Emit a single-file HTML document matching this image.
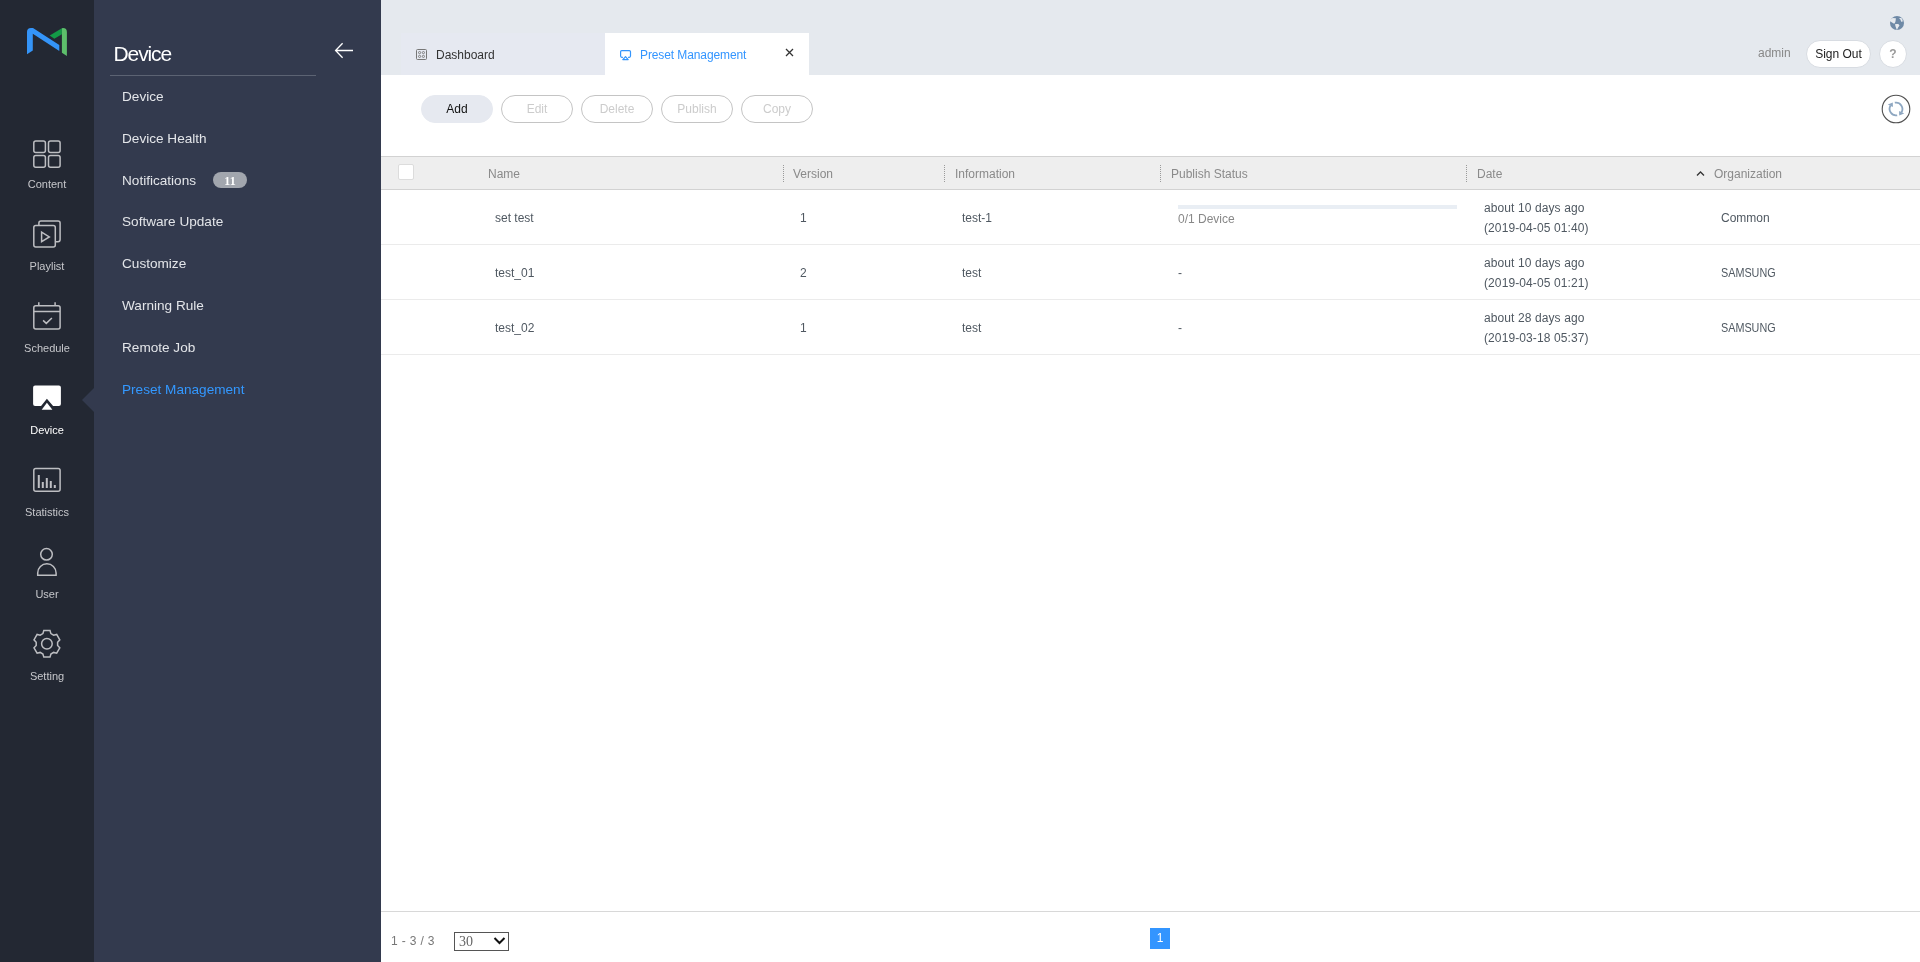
<!DOCTYPE html>
<html><head><meta charset="utf-8">
<style>
*{box-sizing:border-box;margin:0;padding:0}
html,body{width:1920px;height:962px;overflow:hidden;background:#fff;font-family:"Liberation Sans",sans-serif}
body{will-change:transform}
.abs{position:absolute}
#nav{position:absolute;left:0;top:0;width:94px;height:962px;background:#232833}
#side{position:absolute;left:94px;top:0;width:287px;height:962px;background:#333a4e}
#hdr{position:absolute;left:381px;top:0;width:1539px;height:75px;background:#e5e9ee}
.navlbl{position:absolute;left:0;width:94px;text-align:center;font-size:11px;color:#c6c7cb;line-height:13px;margin-top:1px}
.sitem{position:absolute;left:122px;font-size:13.6px;color:#e3e5e9;line-height:16px;white-space:nowrap}
.btn{position:absolute;top:95px;width:72px;height:28px;border-radius:14px;border:1px solid #c4c4c4;font-size:12px;line-height:26px;text-align:center;color:#cccccc;background:#fff}
.th{position:absolute;top:167px;font-size:12px;color:#8a8a8a;line-height:14px;white-space:nowrap}
.sep{position:absolute;top:165px;width:1px;height:17px;background:repeating-linear-gradient(to bottom,#9a9a9a 0,#9a9a9a 1px,transparent 1px,transparent 2px)}
.td{position:absolute;font-size:12px;color:#4f5861;line-height:14px;white-space:nowrap}
.rowb{position:absolute;left:381px;width:1539px;height:1px;background:#ebebeb}
</style></head><body>
<div id="nav">
  <svg class="abs" style="left:0;top:0" width="94" height="700" viewBox="0 0 94 700">
    <!-- logo -->
    <path d="M27 54.3 L27 32 Q27 28 31 28 L33 28 L59.3 45 L59.3 50.9 L32.8 33.7 L32.8 50.6 Z" fill="#3494f8"/>
    <path d="M49.7 35.6 L61.9 28.2 L61.9 34.2 L54.3 38.8 Z" fill="#139a47"/>
    <path d="M61.9 28.2 L63 28 Q66.9 28 66.9 32 L66.9 55.9 L61.9 52.7 Z" fill="#5dbf6b"/>
    <g fill="none" stroke="#bdbec2" stroke-width="1.5">
      <!-- content -->
      <rect x="33.8" y="140.9" width="11.6" height="11.6" rx="2"/>
      <rect x="48.5" y="140.9" width="11.6" height="11.6" rx="2"/>
      <rect x="33.8" y="155.6" width="11.6" height="11.6" rx="2"/>
      <rect x="48.5" y="155.6" width="11.6" height="11.6" rx="2"/>
      <!-- playlist -->
      <path d="M38.9 224.9 V223 Q38.9 220.9 41 220.9 H58 Q60.1 220.9 60.1 223 V239.6 Q60.1 241.7 58 241.7 H56"/>
      <rect x="33.8" y="225.6" width="21.5" height="21.5" rx="2"/>
      <path d="M41.6 232.2 L49.3 236.9 L41.6 241.6 Z"/>
      <!-- schedule -->
      <rect x="33.8" y="305.8" width="26.3" height="23.3" rx="2"/>
      <path d="M33.8 311.6 H60.1 M38.8 302.2 V305.8 M55.1 302.2 V305.8"/>
      <path d="M43.1 320.4 L46.3 323.4 L51.9 318"/>
      <!-- statistics -->
      <rect x="33.8" y="468.5" width="26.3" height="22.8" rx="2"/>
      <!-- user -->
      <circle cx="46.5" cy="554.3" r="5.8"/>
      <path d="M37.7 575.3 V573 A9.2 9.2 0 0 1 56.1 573 V575.3 Z"/>
      <!-- setting -->
      <circle cx="46.9" cy="643.8" r="5.3"/>
      <path d="M43.8 630.5 H50 L50.9 633.6 L53.6 635.2 L56.7 634.4 L59.8 639.8 L57.6 642.2 V645.4 L59.8 647.8 L56.7 653.2 L53.6 652.4 L50.9 654 L50 657.1 H43.8 L42.9 654 L40.2 652.4 L37.1 653.2 L34 647.8 L36.2 645.4 V642.2 L34 639.8 L37.1 634.4 L40.2 635.2 L42.9 633.6 Z"/>
    </g>
    <g fill="#bdbec2">
      <rect x="37.8" y="475" width="2" height="13"/>
      <rect x="41.8" y="482" width="2" height="6"/>
      <rect x="45.8" y="478" width="2" height="10"/>
      <rect x="49.8" y="481" width="2" height="7"/>
      <rect x="53.8" y="485" width="2" height="3"/>
    </g>
    <!-- device -->
    <path d="M35.1 385.6 H58.9 Q60.9 385.6 60.9 387.6 V404 Q60.9 406 58.9 406 H53.1 L46.9 398.7 L41.1 406 H35.1 Q33.1 406 33.1 404 V387.6 Q33.1 385.6 35.1 385.6 Z" fill="#fff"/>
    <path d="M46.9 402.7 L52.4 409.8 H41.7 Z" fill="#fff"/>
    <!-- pointer -->
    <path d="M94 388 L82 400 L94 412 Z" fill="#333a4e"/>
  </svg>
  <div class="navlbl" style="top:177px">Content</div>
  <div class="navlbl" style="top:259px">Playlist</div>
  <div class="navlbl" style="top:341px">Schedule</div>
  <div class="navlbl" style="top:423px;color:#fff">Device</div>
  <div class="navlbl" style="top:505px">Statistics</div>
  <div class="navlbl" style="top:587px">User</div>
  <div class="navlbl" style="top:669px">Setting</div>
</div>

<div id="side">
  <div class="abs" style="left:19.5px;top:42px;font-size:21px;letter-spacing:-1.1px;color:#fff;line-height:24px">Device</div>
  <div class="abs" style="left:16px;top:75px;width:206px;height:1px;background:#5c6373"></div>
  <svg class="abs" style="left:238px;top:40px" width="24" height="22" viewBox="0 0 24 22">
    <path d="M3.6 10.5 H21 M10.6 3.3 L3.6 10.5 L10.6 17.7" fill="none" stroke="#fff" stroke-width="1.3"/>
  </svg>
</div>
<div class="sitem" style="top:89px">Device</div>
<div class="sitem" style="top:131px">Device Health</div>
<div class="sitem" style="top:173px">Notifications</div>
<div class="abs" style="left:213px;top:172px;width:34px;height:16px;border-radius:8px;background:#a2a6ae;color:#fff;font-family:'Liberation Serif',serif;font-weight:bold;font-size:12px;line-height:17px;padding-top:1px;text-align:center">11</div>
<div class="sitem" style="top:214px">Software Update</div>
<div class="sitem" style="top:256px">Customize</div>
<div class="sitem" style="top:298px">Warning Rule</div>
<div class="sitem" style="top:340px">Remote Job</div>
<div class="sitem" style="top:382px;color:#3398ff">Preset Management</div>

<div id="hdr"></div>
<div class="abs" style="left:401px;top:33px;width:204px;height:42px;background:#e6e9f1"></div>
<!-- tabs -->
<svg class="abs" style="left:416px;top:49px" width="11" height="11" viewBox="0 0 11 11">
  <rect x="0.5" y="0.5" width="10" height="10" rx="1" fill="none" stroke="#777" stroke-width="1"/>
  <g fill="none" stroke="#777" stroke-width="0.9"><circle cx="3.6" cy="3.6" r="1.1"/><circle cx="7.4" cy="3.6" r="1.1"/><circle cx="3.6" cy="7.4" r="1.1"/><circle cx="7.4" cy="7.4" r="1.1"/></g>
</svg>
<div class="abs" style="left:436px;top:48px;font-size:12px;color:#333;line-height:14px">Dashboard</div>
<div class="abs" style="left:605px;top:33px;width:204px;height:42px;background:#fff"></div>
<svg class="abs" style="left:616px;top:45px" width="20" height="18" viewBox="0 0 20 18">
  <path d="M6.9 12.3 H5.8 Q4.6 12.3 4.6 11.1 V6.8 Q4.6 5.6 5.8 5.6 H13.3 Q14.5 5.6 14.5 6.8 V11.1 Q14.5 12.3 13.3 12.3 H12.1" fill="none" stroke="#3395fc" stroke-width="1.2"/>
  <path d="M9.5 11.7 L12.2 14.6 H6.8 Z" fill="none" stroke="#3395fc" stroke-width="1.2" stroke-linejoin="round"/>
</svg>
<div class="abs" style="left:640px;top:48px;font-size:12px;letter-spacing:-0.1px;color:#3395ff;line-height:14px">Preset Management</div>
<svg class="abs" style="left:785px;top:48px" width="9" height="9" viewBox="0 0 9 9">
  <path d="M1 1 L8 8 M8 1 L1 8" stroke="#333" stroke-width="1.3"/>
</svg>
<!-- right header -->
<svg class="abs" style="left:1886px;top:12px" width="22" height="22" viewBox="0 0 22 22">
  <circle cx="11" cy="11" r="7" fill="#6e89a6"/>
  <g fill="#e5e9ee">
  <path d="M3.2 8.6 L6.6 5.9 L9.9 6.2 L9.6 9 L8.9 11.1 L8.1 11.8 L5.6 10.3 Z"/>
  <path d="M13 6 L15.4 6.1 L16.7 8 L16.5 9.8 L15.2 9.7 L14.4 7.6 Z"/>
  <path d="M9.2 11.9 L12.3 11.9 L13.5 13.5 L12.1 15.6 L10.9 18.3 L10.1 16.1 L9.3 13.8 Z"/>
  </g>
</svg>
<div class="abs" style="left:1758px;top:46px;font-size:12px;color:#888;line-height:14px">admin</div>
<div class="abs" style="left:1806px;top:40px;width:65px;height:28px;border-radius:14px;background:#fff;border:1px solid #d8dce2;font-size:12px;color:#222;line-height:26px;text-align:center">Sign Out</div>
<div class="abs" style="left:1879px;top:40px;width:28px;height:28px;border-radius:14px;background:#fff;border:1px solid #d8dce2;font-size:12px;color:#999;line-height:26px;text-align:center;font-weight:bold">?</div>

<!-- buttons -->
<div class="btn" style="left:421px;background:#e6e9f0;border-color:#e6e9f0;color:#111">Add</div>
<div class="btn" style="left:501px">Edit</div>
<div class="btn" style="left:581px">Delete</div>
<div class="btn" style="left:661px">Publish</div>
<div class="btn" style="left:741px">Copy</div>
<svg class="abs" style="left:1880px;top:93px" width="32" height="32" viewBox="0 0 32 32">
  <circle cx="16" cy="16" r="13.8" fill="none" stroke="#505050" stroke-width="1.1"/>
  <g fill="none" stroke="#8ea7c1" stroke-width="1.8">
    <path d="M17.2 22.3 A6.4 6.4 0 0 1 10.6 12.6"/>
    <path d="M14.8 9.7 A6.4 6.4 0 0 1 21.4 19.4"/>
  </g>
  <g fill="#8ea7c1">
    <path d="M12.8 9.5 L7.8 11.5 L12.9 13.9 Z"/>
    <path d="M19.2 22.5 L24.2 20.5 L19.1 18.1 Z"/>
  </g>
</svg>

<!-- table header -->
<div class="abs" style="left:381px;top:156px;width:1539px;height:34px;background:#eeeeee;border-top:1px solid #d2d2d2;border-bottom:1px solid #d2d2d2"></div>
<div class="abs" style="left:398px;top:164px;width:16px;height:16px;border:1px solid #dcdcdc;border-radius:2px;background:#fff"></div>
<div class="th" style="left:488px">Name</div>
<div class="sep" style="left:783px"></div>
<div class="th" style="left:793px">Version</div>
<div class="sep" style="left:944px"></div>
<div class="th" style="left:955px">Information</div>
<div class="sep" style="left:1160px"></div>
<div class="th" style="left:1171px">Publish Status</div>
<div class="sep" style="left:1466px"></div>
<div class="th" style="left:1477px">Date</div>
<svg class="abs" style="left:1696px;top:169px" width="9" height="8" viewBox="0 0 9 8">
  <path d="M1 6.5 L4.5 3 L8 6.5" fill="none" stroke="#333" stroke-width="1.3"/>
</svg>
<div class="th" style="left:1714px">Organization</div>

<!-- rows -->
<div class="td" style="left:495px;top:211px">set test</div>
<div class="td" style="left:800px;top:211px">1</div>
<div class="td" style="left:962px;top:211px">test-1</div>
<div class="abs" style="left:1178px;top:205px;width:279px;height:4px;background:#e9eef4"></div>
<div class="td" style="left:1178px;top:212px;color:#888">0/1 Device</div>
<div class="td" style="left:1484px;top:198px;line-height:20px;letter-spacing:0.1px">about 10 days ago<br>(2019-04-05 01:40)</div>
<div class="td" style="left:1721px;top:211px">Common</div>
<div class="rowb" style="top:244px"></div>

<div class="td" style="left:495px;top:266px">test_01</div>
<div class="td" style="left:800px;top:266px">2</div>
<div class="td" style="left:962px;top:266px">test</div>
<div class="td" style="left:1178px;top:266px">-</div>
<div class="td" style="left:1484px;top:253px;line-height:20px;letter-spacing:0.1px">about 10 days ago<br>(2019-04-05 01:21)</div>
<div class="td" style="left:1721px;top:266px;transform:scaleX(0.9);transform-origin:0 0">SAMSUNG</div>
<div class="rowb" style="top:299px"></div>

<div class="td" style="left:495px;top:321px">test_02</div>
<div class="td" style="left:800px;top:321px">1</div>
<div class="td" style="left:962px;top:321px">test</div>
<div class="td" style="left:1178px;top:321px">-</div>
<div class="td" style="left:1484px;top:308px;line-height:20px;letter-spacing:0.1px">about 28 days ago<br>(2019-03-18 05:37)</div>
<div class="td" style="left:1721px;top:321px;transform:scaleX(0.9);transform-origin:0 0">SAMSUNG</div>
<div class="rowb" style="top:354px"></div>

<!-- footer -->
<div class="abs" style="left:381px;top:911px;width:1539px;height:1px;background:#d8d8d8"></div>
<div class="abs" style="left:391px;top:934px;font-size:12px;letter-spacing:0.35px;color:#777;line-height:14px">1 - 3 / 3</div>
<div class="abs" style="left:454px;top:932px;width:55px;height:19px;border:1px solid #555;background:#fff"></div>
<div class="abs" style="left:459px;top:934px;font-family:'Liberation Serif',serif;font-size:14px;color:#666;line-height:16px">30</div>
<svg class="abs" style="left:493px;top:936px" width="13" height="10" viewBox="0 0 13 10">
  <path d="M1.5 2 L6.5 7 L11.5 2" fill="none" stroke="#111" stroke-width="2"/>
</svg>
<div class="abs" style="left:1150px;top:928px;width:20px;height:21px;background:#3395ff;color:#fff;font-size:12px;line-height:21px;text-align:center">1</div>
</body></html>
